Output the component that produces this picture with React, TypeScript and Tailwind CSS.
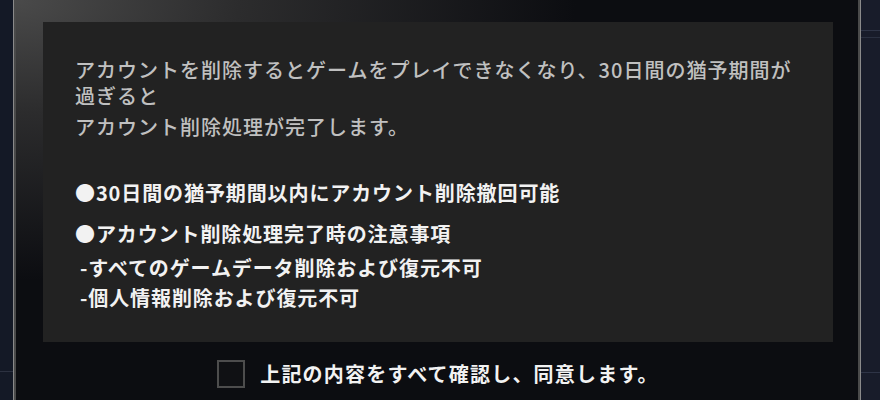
import React, { useState } from 'react';

const jp = { fontFamily: '"Noto Sans CJK JP", "Noto Sans", sans-serif' };

const App: React.FC = () => {
  const [agreed, setAgreed] = useState(false);

  return (
    <div className="flex h-[400px] w-[880px] overflow-hidden bg-[#0b0c10]" style={jp}>
      {/* left backdrop strip */}
      <div className="flex w-[13px] flex-col bg-[#141926]">
        <div className="h-[371px]" />
        <div className="h-px bg-[#2c3140]" />
      </div>
      <div className="w-[1px] bg-[#8a8a8a]" />
      <div className="w-[2px] bg-[#4a4a4a]" />

      {/* modal body */}
      <div className="flex flex-1 flex-col bg-[radial-gradient(ellipse_560px_280px_at_0%_0%,#4a4a4a_0%,#2c2c2d_40%,#0c0d11_100%)] pl-[27px] pr-[25px] pt-[22px]">
        <div className="h-[320px] w-[790px] bg-[#222222] px-[32px] pt-[35px]">
          <div className="text-[20px] font-medium leading-[26px] tracking-[1px] text-[#c0c0c0]">
            <p>
              アカウントを削除するとゲームをプレイできなくなり、30日間の猶予期間が
              <br />
              過ぎると
            </p>
            <p className="mt-[5px]">アカウント削除処理が完了します。</p>
          </div>

          <div className="mt-[38px] text-[20px] font-bold leading-[30px] tracking-[0.9px] text-[#f2f2f2]">
            <p>●30日間の猶予期間以内にアカウント削除撤回可能</p>
            <p className="mt-[11px]">●アカウント削除処理完了時の注意事項</p>
            <p className="mt-[4px] pl-[5px]">-すべてのゲームデータ削除および復元不可</p>
            <p className="pl-[5px]">-個人情報削除および復元不可</p>
          </div>
        </div>

        <label className="mt-[18px] flex w-[790px] cursor-pointer items-center justify-center gap-[15px]">
          <input
            type="checkbox"
            className="sr-only"
            checked={agreed}
            onChange={(e) => setAgreed(e.target.checked)}
          />
          <span className="flex h-[28px] w-[28px] items-center justify-center border-2 border-[#4d4d4d] bg-[#101114]">
            {agreed && (
              <svg viewBox="0 0 24 24" className="h-5 w-5" fill="none" stroke="#fff" strokeWidth="3">
                <path d="M5 12l5 5 9-10" />
              </svg>
            )}
          </span>
          <span className="text-[20px] font-bold leading-[28px] tracking-[1.2px] text-[#f2f2f2]">
            上記の内容をすべて確認し、同意します。
          </span>
        </label>
      </div>

      <div className="w-[2px] bg-[#4a4a4a]" />
      <div className="w-[1px] bg-[#8a8a8a]" />
      {/* right backdrop strip */}
      <div className="flex flex-1 flex-col bg-[#181c2a]">
        <div className="h-[30px]" />
        <div className="h-px bg-[#2e3446]" />
        <div className="h-[6px]" />
        <div className="h-px bg-[#2a3040]" />
        <div className="h-[334px]" />
        <div className="h-px bg-[#2e3446]" />
      </div>
    </div>
  );
};

export default App;
